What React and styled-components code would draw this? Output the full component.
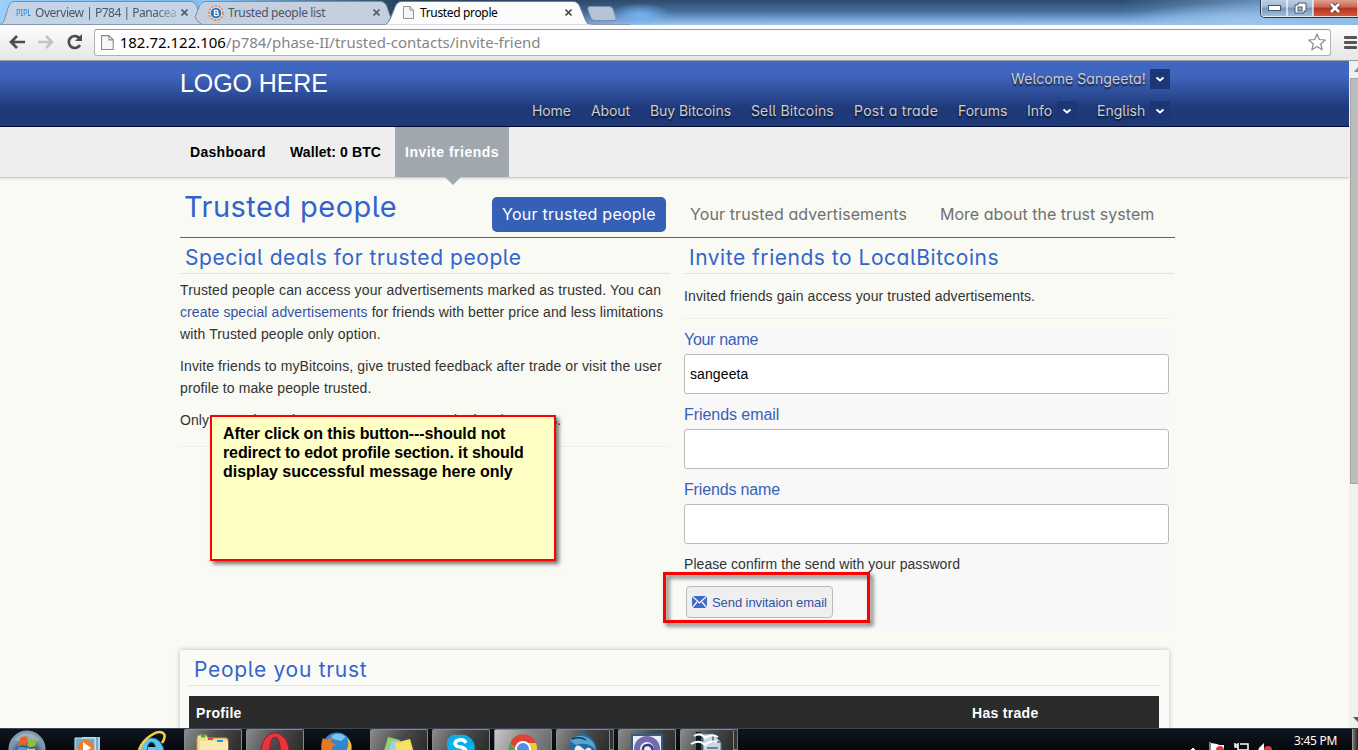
import React from "react";
import styled, { createGlobalStyle } from "styled-components";

const Global = createGlobalStyle`
  * { box-sizing: border-box; }
  body { margin: 0; overflow: hidden; }
  a { color: #3353a4; text-decoration: none; }
`;
const ui = `"Noto Sans", "Open Sans", sans-serif`;
const sans = `"Liberation Sans", Arial, sans-serif`;
const display = `Inter, "Noto Sans", sans-serif`;

const Screen = styled.div`
  position: relative; width: 1358px; height: 750px; overflow: hidden;
  display: flex; flex-direction: column; font-family: ${sans};
`;

/* browser frame */
const TitleBar = styled.div`
  position: relative; height: 25px; flex: none; display: flex; overflow: hidden;
  background:
    radial-gradient(ellipse 30px 12px at 640px 15px, #75b5f1 0, transparent 100%),
    radial-gradient(ellipse 120px 20px at 1245px 22px, #9cc5ec 0, transparent 100%),
    linear-gradient(90deg, #9ad0fb 0, #75b9ed 190px, #8ccaf8 205px, #28415c 400px, transparent 640px, transparent 1120px, #8fbce6 1358px),
    linear-gradient(#2c4a6b 0, #456f9e 45%, #7aa8dc 80%, #a2c5ea 100%);
`;
const TabArt = styled.svg`position: absolute; left: 0; top: 0;`;
const Tab = styled.div`
  position: relative; flex: none; height: 25px; width: ${p => p.$w}px;
  padding: 0 11px 0 ${p => p.$pad}px; display: flex; align-items: center; gap: ${p => p.$gap || 5}px;
  font: 12px ${ui}; color: ${p => (p.$active ? "#000" : "#4b5666")};
`;
const TabText = styled.span`
  flex: 1; white-space: nowrap; letter-spacing: ${p => p.$ls || 0}px;
  ${p => p.$fade && "mask-image: linear-gradient(90deg,#000 84%,rgba(0,0,0,.25));"}
`;
const Pipl = styled.span`font: 9px ${ui}; color: #1c86e8; letter-spacing: -.2px; width: 16px; transform: scaleX(.85); transform-origin: left;`;
const WinButtons = styled.div`
  position: absolute; right: 0; top: -1px; height: 19px; width: 98px; display: flex;
  border: 1px solid #26364a; border-right: 0; border-radius: 0 0 0 5px; overflow: hidden;
`;
const WinButton = styled.div`
  width: ${p => p.$w}px; display: flex; align-items: center; justify-content: center;
  border: 1px solid rgba(255,255,255,.6); border-top: 0;
  background: ${p => (p.$close ? "linear-gradient(#dfa092,#cc6550 45%,#b5331c 50%,#d4583a)" : "linear-gradient(#bccfe2,#9fb8d2 45%,#7795b6 50%,#9fbddd)")};
`;
const Toolbar = styled.div`
  height: 36px; flex: none; display: flex; align-items: center; padding: 0 0 1px 8px;
  background: linear-gradient(#fdfdfd,#e6e6e6); border-bottom: 1px solid #9e9e9e;
`;
const NavIcons = styled.div`display: flex; gap: 11px; width: 86px;`;
const Omnibox = styled.div`
  width: 1237px; height: 27px; display: flex; align-items: center; background: #fff;
  border: 1px solid #b1b1b1; border-top-color: #999; border-radius: 3px; padding: 0 4px 0 6px;
`;
const Url = styled.div`
  flex: 1; margin-left: 6px; font: 15px ${ui}; letter-spacing: -.02px; color: #858585; white-space: nowrap;
  b { color: #000; font-weight: 400; }
`;
const MenuBars = styled.div`
  margin-left: 13px; width: 13px; height: 13px; display: flex; flex-direction: column; justify-content: space-between;
  i { height: 3px; background: #555; border-radius: 1px; }
`;

/* site */
const Viewport = styled.div`height: 667px; flex: none; display: flex; overflow: hidden; background: #f9faf4;`;
const Page = styled.div`width: 1349px; flex: none;`;
const Scrollbar = styled.div`
  width: 9px; background: #f0f0f0; display: flex; flex-direction: column; align-items: flex-end; overflow: hidden;
`;
const ScrollArrow = styled.svg`flex: none; width: 5px; height: 17px;`;
const Thumb = styled.div`width: 8px; height: 406px; background: #bcbcbc; border: 1px solid #a5a5a5; border-right: 0;`;
const ScrollGap = styled.div`flex: 1;`;

const Header = styled.header`
  height: 66px; padding: 0 179px 0 180px; display: flex; justify-content: space-between;
  background: linear-gradient(#4067c1 0, #3f65be 22%, #2f4f9b 48%, #1f3a7b 72%, #1e3979 100%); border-bottom: 1px solid #020c30;
`;
const Logo = styled.div`font-size: 25px; line-height: 45px; letter-spacing: -.1px; color: #fff;`;
const HeaderRight = styled.div`display: flex; flex-direction: column; align-items: flex-end;`;
const HeaderRow = styled.nav`display: flex; height: ${p => p.$h}px; padding-top: ${p => p.$top}px;`;
const NavItem = styled.div`
  width: ${p => p.$w}px; display: flex; justify-content: space-between; white-space: nowrap;
  font: 14px/${p => p.$lh || 20}px ${display}; font-feature-settings: "cv11","cv05"; letter-spacing: ${p => p.$ls || 0}px;
  color: #ccc; text-shadow: 0 2px 2px rgba(0,0,0,.75);
`;
const CaretBox = styled.span`
  width: 20px; height: 20px; margin-right: ${p => p.$mr || 0}px; display: flex; align-items: center; justify-content: center; background: #1c3676;
`;
const SubNav = styled.nav`
  height: 51px; display: flex; padding-left: 180px; background: #eee; border-bottom: 1px solid #ccc; box-shadow: 0 1px 2px rgba(0,0,0,.12);
`;
const SubItem = styled.div`
  position: relative; width: ${p => p.$w}px; padding-left: 10px; height: 50px; white-space: nowrap;
  font: bold 14px/50px ${sans}; letter-spacing: ${p => p.$ls}px; color: ${p => (p.$on ? "#fff" : "#000")};
  background: ${p => (p.$on ? "#a0a7af" : "none")};
  ${p => p.$on && `&::after { content: ""; position: absolute; left: 50%; top: 50px; margin-left: -7px;
    border: 8px solid transparent; border-top-color: #a0a7af; border-bottom: 0; }`}
`;
const Content = styled.main`padding-left: 180px;`;
const TitleRow = styled.div`
  width: 995px; height: 60px; padding: 0 0 5px 4px; display: flex; align-items: flex-end; border-bottom: 1px solid #626262;
`;
const Title = styled.h1`
  margin: 0; width: 308px; font: 400 29px/35px ${display}; font-feature-settings: "cv11","cv05";
  letter-spacing: .45px; color: #3364cb; padding-bottom: 8px;
`;
const Pill = styled.div`
  width: ${p => p.$w}px; height: 35px; padding-left: 10px; border-radius: 5px; white-space: nowrap;
  margin-right: ${p => p.$mr || 0}px; font: 16px/35px ${display}; font-feature-settings: "cv11","cv05";
  letter-spacing: ${p => p.$ls}px; background: ${p => (p.$on ? "#3660b6" : "none")}; color: ${p => (p.$on ? "#fff" : "#707070")};
`;
const Columns = styled.div`display: flex; gap: 14px; height: 412px;`;
const Column = styled.section`width: 490px;`;
const Heading = styled.h2`
  margin: 0; height: 36px; padding-left: 5px; font: 400 21px/39px ${display}; white-space: nowrap;
  font-feature-settings: "cv11","cv05"; letter-spacing: ${p => p.$ls}px; color: #3364cb; border-bottom: 1px solid #e2e2e2;
`;
const Para = styled.p`
  margin: 0 0 10px; font-size: 14px; line-height: 22px; letter-spacing: ${p => p.$ls || 0}px; color: #333; white-space: nowrap;
`;
const Line = styled.span`display: block; letter-spacing: ${p => p.$ls || 0}px;`;
const LeftText = styled.div`padding: 5px 0 5px; border-bottom: 1px solid #eee;`;
const RightText = styled.div`height: 45px; padding-top: 11px; border-bottom: 1px solid #eee; width: 485px;`;
const Form = styled.form`width: 485px; height: 301px; margin-top: 10px; background: #f8f8f8;`;
const Label = styled.label`display: block; height: 25px; line-height: 21px; font-size: 16px; letter-spacing: ${p => p.$ls}px; color: #3860b7;`;
const Field = styled.input`
  display: block; width: 485px; height: 40px; margin: 0 0 10px; padding: 0 5px; border: 1px solid #bbb; border-radius: 3px;
  background: #fff; color: #000; font: 14px ${sans}; letter-spacing: .1px; outline: 0;
`;
const Confirm = styled(Para)`height: 22px; line-height: 20px;`;
const Button = styled.button`
  margin: 1px 0 0 2px; width: 147px; height: 32px; padding: 0 0 0 5px; display: flex; align-items: center; gap: 5px;
  border: 1px solid #bbb; border-radius: 4px; background: #efefef; color: #3353a4; font: 13px ${sans}; letter-spacing: -.08px; white-space: nowrap;
`;
const Panel = styled.section`
  width: 989px; height: 100px; padding: 0 9px; background: #fafbf6; box-shadow: 0 0 5px rgba(0,0,0,.24);
`;
const TableHead = styled.div`
  width: 970px; height: 40px; margin-top: 10px; padding-left: 7px; display: flex; background: #2b2b2b; color: #fff;
  font: bold 14px/34px ${sans}; letter-spacing: .3px;
  span:first-child { width: 776px; }
`;

/* markup laid over the site */
const Note = styled.aside`
  position: absolute; left: 210px; top: 415px; width: 346px; height: 146px; padding: 7px 11px; border: 2px solid #f00;
  background: #ffffc5; box-shadow: 3px 3px 4px rgba(0,0,0,.55); font: bold 16px/19px ${sans}; color: #000; white-space: nowrap;
`;
const RedFrame = styled.div`
  position: absolute; left: 663px; top: 572px; width: 207px; height: 51px; border: 3px solid #f00;
  filter: drop-shadow(3px 3px 2px rgba(0,0,0,.6));
`;

/* taskbar */
const Taskbar = styled.footer`
  position: relative; height: 22px; flex: none; display: flex; overflow: hidden; background: linear-gradient(#10151d,#05090e); border-top: 1px solid #3a4656;
`;
const Task = styled.div`
  width: ${p => p.$w || 58}px; margin-right: ${p => p.$mr ?? 4}px; flex: none; display: flex; justify-content: center;
  ${p => p.$open && `background: linear-gradient(115deg,${p.$light ? "#c8c8c8,#8b8b8b 50%,#6a6a6a" : "#8b8b8b,#4c4c4c 50%,#2b2b2b"}); border: 1px solid #85888c; border-bottom: 0; border-radius: 2px 2px 0 0;`}
`;
const Stack = styled.div`width: 4px; margin: 0 4px 0 -4px; border: 1px solid #777; border-left: 0; background: #333;`;
const Tray = styled.div`margin-left: auto; display: flex; width: 174px;`;
const Clock = styled.div`font: 12px/23px ${ui}; color: #fff; width: 58px; letter-spacing: -.3px; white-space: nowrap;`;
const ShowDesktop = styled.div`width: 6px; background: linear-gradient(90deg,#777,#222); border-left: 1px solid #999;`;

const Close = ({ c = "#4d5661" }) => <svg width="9" height="9" viewBox="0 0 9 9"><path d="M1.5 1.5l6 6m0-6l-6 6" stroke={c} strokeWidth="1.7" /></svg>;
const Doc = ({ h = 14 }) => <svg width={h * .85} height={h} viewBox="0 0 12 14"><path d="M.5.5h7l4 4v9H.5zM7.5.5v4h4" fill="#f7f7f7" stroke="#888" /></svg>;
const Caret = () => <svg width="10" height="8" viewBox="0 0 10 8"><path d="M1.5 2.5L5 5.5l3.5-3" fill="none" stroke="#fff" strokeWidth="2" /></svg>;
const Coin = () => (
  <svg width="16" height="16" viewBox="0 0 16 16"><circle cx="8" cy="8" r="7" fill="#dce5ee" stroke="#e59055" strokeWidth="1.8" strokeDasharray="2.2 1.3" />
    <circle cx="8" cy="8" r="5.3" fill="#2b78c0" /><path d="M6.5 5v6M6.5 5.3h2a1.3 1.3 0 010 2.6h-2m0 0H9a1.4 1.4 0 010 2.8H6.5" fill="none" stroke="#fff" strokeWidth="1.2" /></svg>
);
const Tabs = () => (
  <TabArt width="630" height="25" viewBox="0 0 630 25">
    <path d="M-1 24.5C4 24 4 21 8 8Q10 1.500 14 1.500H190Q195 1.500 197 7L203 24.500z" fill="#c4d3e5" stroke="#7d8ea3" />
    <path d="M202 24.500Q197 22 195 17L199 7Q201 1.500 206 1.500H380Q385 1.500 387 7L393 24.500z" fill="#c4d0e0" stroke="#7d8ea3" />
    <path d="M385 25Q389 23 391 17L395 7Q397 1.500 402 1.500H573Q578 1.500 580 7L585 19Q587 25 591 25z" fill="#fcfcfc" stroke="#6e8097" />
    <path d="M590 6.500H609Q612 6.500 613 9L616 18Q617 20.500 614 20.500H595Q592 20.500 591 18L588 10Q587 6.500 590 6.500z" fill="#b4c4d6" stroke="#7790aa" />
    <path d="M0 24.500H386M591 24.500H630" stroke="#8796a8" /><path d="M386 25H591" stroke="#fcfcfc" />
  </TabArt>
);

const icons = {
  start: <svg width="40" height="22" viewBox="0 0 40 22"><defs><radialGradient id="orb" cy=".7"><stop stopColor="#5cc5f4" /><stop offset=".6" stopColor="#245a87" /><stop offset="1" stopColor="#7c98ad" /></radialGradient></defs><circle cx="20" cy="20" r="18" fill="url(#orb)" stroke="#8ba3b5" /><path d="M7 11Q20-3 33 11Q20 15 7 11" fill="#fff" opacity=".25" /><path d="M13 9q4-3 8-1l-2 9q-4-2-8 1z" fill="#e8632c" /><path d="M22 9q4 2 8 0l-2 8q-4 2-8 0z" fill="#8fbf3d" /><path d="M11 19q4-2 8 0v4h-9z" fill="#43a3e2" /><path d="M20 19q4 2 8 0v4h-8z" fill="#f3c535" /></svg>,
  media: <svg width="28" height="22" viewBox="0 0 28 22"><path d="M8 8h18v14H8z" fill="#a9d3e9" /><path d="M1 9h20v13H1z" fill="#6cb0d9" stroke="#d2ebf6" /><path d="M23 8v14" stroke="#3b87b4" /><circle cx="12" cy="19" r="8" fill="#f07d22" /><path d="M9 13l8 6-8 5z" fill="#fff" /></svg>,
  ie: <svg width="32" height="22" viewBox="0 0 32 22"><path d="M3 24A12.500 15 0 0128 24H20Q20 13 15.500 13T11 24z" fill="#5bc7f4" stroke="#217bbd" /><path d="M12 18h8v4h-8z" fill="#5bc7f4" /><path d="M3 21C7 9 23-1 28 5Q30 8 26 14" fill="none" stroke="#f7d03c" strokeWidth="2.600" /></svg>,
  folder: <svg width="34" height="22" viewBox="0 0 34 22"><path d="M1 8q0-3 3-3h6l2 3h18q2 0 2 3v11H1z" fill="#f4dc8f" stroke="#bd9840" /><path d="M4 11h28v11H4z" fill="#f8e9b2" /><path d="M5 6h4" stroke="#2caf45" strokeWidth="3" /><path d="M12 9h5" stroke="#d44b32" strokeWidth="2" /><path d="M21 11h6" stroke="#2493de" strokeWidth="2" /></svg>,
  opera: <svg width="30" height="22" viewBox="0 0 30 22"><path d="M1 22A14 19 0 0129 22H20.500Q20 7 15 7T9.500 22z" fill="#e7343f" stroke="#a8161d" /></svg>,
  firefox: <svg width="32" height="22" viewBox="0 0 32 22"><circle cx="16" cy="18" r="14.500" fill="#2f87cf" /><path d="M10 7q8-5 15 1l-5 4-8-2z" fill="#75c9ef" /><path d="M2 9l4 2 5-3-1 5 6 3q-7 0-4 7H1Q-1 16 2 9z" fill="#e87824" /><path d="M26 9q6 5 4 13h-5q4-6 1-13z" fill="#f3be35" /></svg>,
  notes: <svg width="32" height="22" viewBox="0 0 32 22"><path d="M5 7l12 3-4 14H0z" fill="#92d273" /><path d="M9 11l14 1 2 11H5z" fill="#a0ceef" /><path d="M12 13l15-4 4 14H13z" fill="#f7df60" /></svg>,
  skype: <svg width="32" height="22" viewBox="0 0 32 22"><path d="M2 12A9 9 0 0114 5A13 13 0 0129 22H4Q1 17 2 12z" fill="#08aeec" /><path d="M21 13q-2-4-7-3-4 1-4 4 1 3 6 3 6 2 5 6" fill="none" stroke="#fff" strokeWidth="3.500" /></svg>,
  chrome: <svg width="30" height="22" viewBox="0 0 30 22"><circle cx="15" cy="19" r="14" fill="#f1cb35" /><path d="M2 13A14 14 0 0128 13H15l-6 7z" fill="#dc4437" /><path d="M2 13l9 11H1Q0 17 2 13z" fill="#3ca357" /><circle cx="15" cy="19" r="7" fill="#4f91e8" stroke="#fff" strokeWidth="2" /></svg>,
  bird: <svg width="32" height="22" viewBox="0 0 32 22"><path d="M2 20Q1 7 16 3q13 4 14 19H5z" fill="#266a9f" /><path d="M3 11q7-8 16-4 8 3 10 13-8-9-20-5z" fill="#55a5cf" /><path d="M7 22q1-8 6-6l5 4q4-6 8 2z" fill="#eee" /><path d="M5 9q8-3 14 1" fill="none" stroke="#14395d" strokeWidth="1.500" /></svg>,
  swirl: <svg width="32" height="22" viewBox="0 0 32 22"><path d="M1 5h30v18H1z" fill="#eceef5" stroke="#395a82" strokeWidth="2" /><circle cx="16" cy="19" r="10" fill="none" stroke="#726bb4" strokeWidth="6" /><path d="M12 22q-1-8 6-7 5 2 3 8" fill="none" stroke="#413d83" strokeWidth="2.500" /></svg>,
  writer: <svg width="34" height="22" viewBox="0 0 34 22"><path d="M13 4h10l8 8v11H13z" fill="#c7d8e6" stroke="#52708b" /><path d="M23 4v8h8M17 18h11" fill="none" stroke="#49677f" strokeWidth="1.500" /><path d="M6 2h5v20H6z" fill="#0a1928" /><path d="M4 6q7-4 11 2 6-5 13-1M1 14q9-5 14 1 5-5 12-3" fill="none" stroke="#fff" strokeWidth="2" /></svg>,
};

function Chrome() {
  return <>
    <TitleBar>
      <Tabs />
      <Tab $w={200} $pad={16} $gap={3}><Pipl>PIPL</Pipl><TabText $fade $ls={-.48}>Overview | P784 | Panacea</TabText><Close /></Tab>
      <Tab $w={192} $pad={8} $gap={4}><Coin /><TabText $ls={-.35}>Trusted people list</TabText><Close /></Tab>
      <Tab $w={192} $pad={11} $active $gap={6}><Doc h={13} /><TabText $ls={-.35}>Trusted prople</TabText><Close c="#444" /></Tab>
      <WinButtons>
        <WinButton $w={28}><svg width="13" height="6"><rect x=".5" y=".5" width="12" height="5" fill="#fff" stroke="#48566a" /></svg></WinButton>
        <WinButton $w={27}><svg width="13" height="12"><path d="M4 1h8v8h-2v2H1V3h3z" fill="#fff" stroke="#48566a" /><rect x="4" y="5" width="4" height="4" fill="#9fb8d2" stroke="#48566a" /></svg></WinButton>
        <WinButton $w={48} $close><svg width="13" height="12"><path d="M2 2l8 8m0-8l-8 8" stroke="#4e4752" strokeWidth="4.500" /><path d="M2 2l8 8m0-8l-8 8" stroke="#fff" strokeWidth="2.600" /></svg></WinButton>
      </WinButtons>
    </TitleBar>
    <Toolbar>
      <NavIcons>
        <svg width="18" height="16"><path d="M17 8H4M9 2L3 8l6 6" fill="none" stroke="#4d4d4d" strokeWidth="2.700" /></svg>
        <svg width="18" height="16"><path d="M1 8h13M9 2l6 6-6 6" fill="none" stroke="#c3c3c3" strokeWidth="2.700" /></svg>
        <svg width="18" height="16"><path d="M14 5A6 6 0 1014 11" fill="none" stroke="#4d4d4d" strokeWidth="2.700" /><path d="M16 0v7H9z" fill="#4d4d4d" /></svg>
      </NavIcons>
      <Omnibox><Doc h={15} /><Url><b>182.72.122.106</b>/p784/phase-II/trusted-contacts/invite-friend</Url>
        <svg width="18" height="18" viewBox="0 0 18 18"><path d="M9 1l2.300 5.500 6 .5-4.600 3.900 1.500 5.900L9 13.600l-5.200 3.200 1.500-5.900L.7 7l6-.5z" fill="#fff" stroke="#888" strokeWidth="1.200" strokeLinejoin="round" /></svg>
      </Omnibox>
      <MenuBars><i /><i /><i /></MenuBars>
    </Toolbar>
  </>;
}

function SiteHeader() {
  return <>
    <Header>
      <Logo>LOGO HERE</Logo>
      <HeaderRight>
        <HeaderRow $h={40} $top={8}><NavItem $w={159} $ls={.08}>Welcome Sangeeta!<CaretBox><Caret /></CaretBox></NavItem></HeaderRow>
        <HeaderRow $h={25} $top={0}>
          <NavItem $lh={19} $w={59} $ls={-.1}>Home</NavItem>
          <NavItem $lh={19} $w={59} $ls={-.1}>About</NavItem>
          <NavItem $lh={19} $w={101} $ls={-.06}>Buy Bitcoins</NavItem>
          <NavItem $lh={19} $w={103} $ls={.12}>Sell Bitcoins</NavItem>
          <NavItem $lh={19} $w={104} $ls={.3}>Post a trade</NavItem>
          <NavItem $lh={19} $w={69}>Forums</NavItem>
          <NavItem $lh={19} $w={70}>Info<CaretBox $mr={20}><Caret /></CaretBox></NavItem>
          <NavItem $lh={19} $w={73}>English<CaretBox><Caret /></CaretBox></NavItem>
        </HeaderRow>
      </HeaderRight>
    </Header>
    <SubNav>
      <SubItem $w={100} $ls={.3}>Dashboard</SubItem>
      <SubItem $w={115} $ls={.1}>Wallet: 0 BTC</SubItem>
      <SubItem $w={114} $ls={.5} $on>Invite friends</SubItem>
    </SubNav>
  </>;
}

export default function App() {
  return (
    <Screen>
      <Global />
      <Chrome />
      <Viewport>
        <Page>
          <SiteHeader />
          <Content>
            <TitleRow>
              <Title>Trusted people</Title>
              <Pill $w={174} $mr={14} $ls={.25} $on>Your trusted people</Pill>
              <Pill $w={250} $ls={.1}>Your trusted advertisements</Pill>
              <Pill $w={230} $ls={.02}>More about the trust system</Pill>
            </TitleRow>
            <Columns>
              <Column>
                <Heading $ls={.56}>Special deals for trusted people</Heading>
                <LeftText>
                  <Para><Line $ls={.15}>Trusted people can access your advertisements marked as trusted. You can</Line><Line $ls={.085}><a href="#">create special advertisements</a> for friends with better price and less limitations</Line><Line $ls={.12}>with Trusted people only option.</Line></Para>
                  <Para><Line $ls={.1}>Invite friends to myBitcoins, give trusted feedback after trade or visit the user</Line><Line $ls={.1}>profile to make people trusted.</Line></Para>
                  <Para><Line $ls={.09}>Only trusted people can access your trusted advertisements.</Line></Para>
                </LeftText>
              </Column>
              <Column>
                <Heading $ls={.52}>Invite friends to LocalBitcoins</Heading>
                <RightText><Para $ls={.1}>Invited friends gain access your trusted advertisements.</Para></RightText>
                <Form>
                  <Label $ls={-.3}>Your name</Label><Field defaultValue="sangeeta" />
                  <Label $ls={-.06}>Friends email</Label><Field />
                  <Label $ls={-.16}>Friends name</Label><Field />
                  <Confirm $ls={.05}>Please confirm the send with your password</Confirm>
                  <Button type="button"><svg width="15" height="12"><path d="M0 0h15v12H0z" fill="#426bc8" /><path d="M0 0l7.500 7L15 0M0 12l5-6m10 6l-5-6" fill="none" stroke="#fff" strokeWidth="1.200" /></svg>Send invitaion email</Button>
                </Form>
              </Column>
            </Columns>
            <Panel>
              <Heading $ls={.7}>People you trust</Heading>
              <TableHead><span>Profile</span><span>Has trade</span></TableHead>
            </Panel>
          </Content>
        </Page>
        <Scrollbar>
          <ScrollArrow><path d="M1 11l4-5v5z" fill="#8b8b8b" /></ScrollArrow><Thumb /><ScrollGap />
          <ScrollArrow><path d="M0 6h6l-1 5z" fill="#555" /></ScrollArrow>
        </Scrollbar>
      </Viewport>
      <Taskbar>
        <Task $w={54} $mr={8}>{icons.start}</Task>
        <Task $w={52} $mr={10}>{icons.media}</Task>
        <Task $w={56}>{icons.ie}</Task>
        <Task $open>{icons.folder}</Task>
        <Task $open>{icons.opera}</Task>
        <Task>{icons.firefox}</Task>
        <Task $open>{icons.notes}</Task>
        <Task $open>{icons.skype}</Task>
        <Task $open $light>{icons.chrome}</Task>
        <Task $open $w={54}>{icons.bird}</Task><Stack />
        <Task $open>{icons.swirl}</Task>
        <Task $open $w={54}>{icons.writer}</Task><Stack />
        <Tray>
          <svg width="110" height="22"><path d="M6 22l3-3 3 3M26 13v9" fill="#fff" stroke="#fff" /><path d="M27 14l6 1 2 1h5v6H27z" fill="#fff" /><circle cx="36" cy="21" r="4" fill="#e23b32" /><path d="M51 14v4h3v-4m-3 2h3M56 15h8v6H54v-3" fill="none" stroke="#fff" strokeWidth="1.500" /><path d="M75 19l5-5v8h-6z" fill="#fff" /><circle cx="84" cy="21" r="4" fill="#e23b32" /></svg>
          <Clock>3:45 PM</Clock><ShowDesktop />
        </Tray>
      </Taskbar>
      <Note><Line $ls={-.1}>After click on this button---should not</Line><Line $ls={-.12}>redirect to edot profile section. it should</Line><Line $ls={-.03}>display successful message here only</Line></Note>
      <RedFrame />
    </Screen>
  );
}
